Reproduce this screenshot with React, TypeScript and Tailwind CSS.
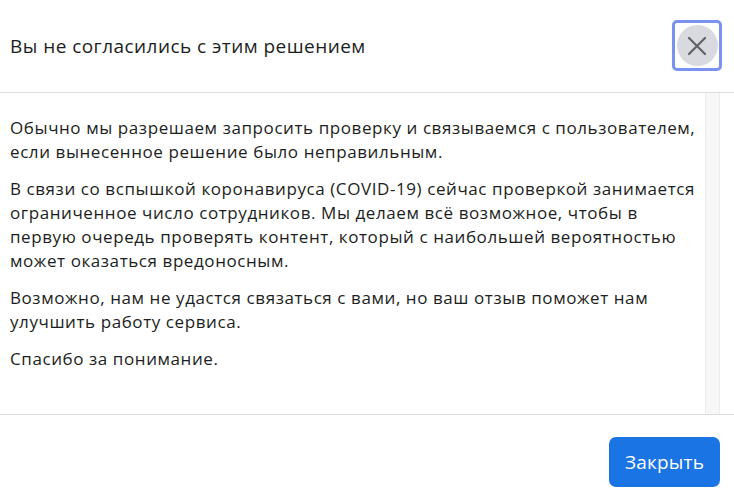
import React from "react";

export default function App() {
  return (
    <div
      className="w-[734px] h-[500px] bg-white flex flex-col text-[#1c1e21] overflow-hidden"
      style={{ fontFamily: '"Open Sans", "Liberation Sans", Arial, sans-serif' }}
    >
      <div className="h-[93px] flex items-center justify-between pl-[10px] pr-[12px] border-b border-[#dadde1] shrink-0">
        <div className="text-[19px] leading-[24px] tracking-[0.45px] mt-[-1px]">Вы не согласились с этим решением</div>
        <div className="w-[50px] h-[51px] rounded-[5px] border-[3px] border-[#7b93f0] flex items-center justify-center mt-[-1px]">
          <div className="w-[41px] h-[41px] rounded-full bg-[#d8dadf] flex items-center justify-center">
            <svg width="22" height="22" viewBox="0 0 22 22" fill="none" stroke="#5f6368" strokeWidth="2.2" strokeLinecap="round">
              <path d="M3 3 L19 19 M19 3 L3 19" />
            </svg>
          </div>
        </div>
      </div>
      <div className="flex h-[321px] shrink-0">
        <div className="flex-1 pl-[10px] pt-[23px] text-[17px] leading-[24px] tracking-[0.58px] flex flex-col gap-[13px] whitespace-nowrap">
          <p>
            Обычно мы разрешаем запросить проверку и связываемся с пользователем,
            <br />
            если вынесенное решение было неправильным.
          </p>
          <p>
            В связи со вспышкой коронавируса (COVID-19) сейчас проверкой занимается
            <br />
            ограниченное число сотрудников. Мы делаем всё возможное, чтобы в
            <br />
            первую очередь проверять контент, который с наибольшей вероятностью
            <br />
            может оказаться вредоносным.
          </p>
          <p>
            Возможно, нам не удастся связаться с вами, но ваш отзыв поможет нам
            <br />
            улучшить работу сервиса.
          </p>
          <p>Спасибо за понимание.</p>
        </div>
        <div className="w-[15px] bg-[#f7f7f7] border-l border-r border-[#ececec] mr-[14px]" />
      </div>
      <div className="border-t border-[#dadde1] flex-1 flex justify-end items-start pt-[22px] pr-[14px]">
        <button className="w-[111px] h-[50px] rounded-[7px] bg-[#1b74e4] text-white text-[19px] leading-[24px] tracking-[0.2px]">
          Закрыть
        </button>
      </div>
    </div>
  );
}
